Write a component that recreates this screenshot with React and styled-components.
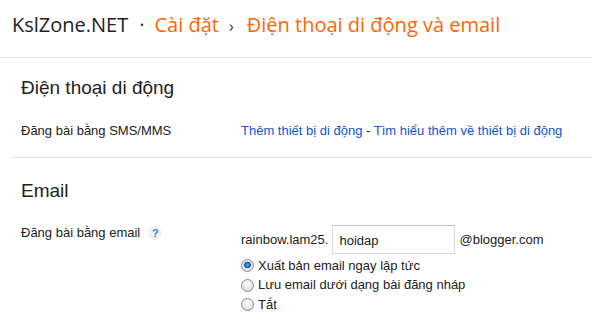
import React, { useState } from "react";
import styled, { createGlobalStyle } from "styled-components";

const GlobalStyle = createGlobalStyle`
  html, body {
    margin: 0;
    padding: 0;
    background: #fff;
  }
  body {
    font-family: "Liberation Sans", Arial, sans-serif;
    font-size: 13px;
    color: #222;
  }
`;

const Header = styled.div`
  height: 58px;
  box-sizing: border-box;
  border-bottom: 1px solid #e5e5e5;
  padding: 11px 0 0 12px;
  display: flex;
  align-items: baseline;
  font-family: "Open Sans", sans-serif;
  font-size: 20px;
  line-height: 28px;
  white-space: nowrap;
`;

const Crumb = styled.span`
  color: ${({ $active }) => ($active ? "#f60" : "#222")};
`;

const Sep = styled.span`
  color: #333;
  font-size: ${({ $small }) => ($small ? "16px" : "20px")};
  margin: 0 ${({ $right }) => $right}px 0 ${({ $left }) => $left}px;
`;

const Section = styled.div`
  padding: 0 0 0 21px;
`;

const Title = styled.h2`
  margin: 0;
  padding-top: ${({ $top }) => $top}px;
  font-size: 19px;
  font-weight: normal;
  line-height: 22px;
  color: #222;
`;

const Row = styled.div`
  display: grid;
  grid-template-columns: 220px 1fr;
  margin-top: ${({ $top }) => $top}px;
  line-height: 16px;
`;

const Label = styled.div`
  display: flex;
  align-items: center;
  gap: 8px;
  align-self: start;
`;

const Help = styled.span`
  width: 14px;
  height: 14px;
  border-radius: 50%;
  background: #f1f1f1;
  color: #4d7de0;
  font-size: 11px;
  font-weight: bold;
  line-height: 14px;
  text-align: center;
`;

const Link = styled.a`
  color: #15c;
  text-decoration: none;
`;

const Divider = styled.div`
  height: 1px;
  background: #e5e5e5;
  margin: 18px 0 0 11px;
`;

const EmailLine = styled.div`
  display: flex;
  align-items: center;
  gap: 4px;
`;

const Input = styled.input`
  width: 123px;
  height: 29px;
  box-sizing: border-box;
  border: 1px solid #d9d9d9;
  border-top-color: #c0c0c0;
  border-radius: 1px;
  padding: 1px 6px 0;
  font-family: "Liberation Sans", Arial, sans-serif;
  font-size: 13px;
  color: #222;
  outline: none;
`;

const Options = styled.div`
  display: flex;
  flex-direction: column;
  margin-top: 2px;
`;

const Option = styled.label`
  display: flex;
  align-items: center;
  gap: 4px;
  height: 19.5px;
`;

const Radio = styled.input.attrs({ type: "radio" })`
  appearance: none;
  margin: 0;
  width: 13px;
  height: 13px;
  border-radius: 50%;
  border: 1px solid #8a8a8a;
  box-sizing: border-box;
  background: radial-gradient(circle at 50% 35%, #fdfdfd 0%, #e8e8e8 55%, #cfcfcf 100%);
  &:checked {
    background: radial-gradient(circle at 50% 45%, #5cb0f0 0%, #1d6db8 28%, #0e4f93 38%, #dfe9f3 44%, #e6e6e6 70%, #cfcfcf 100%);
  }
`;

export default function App() {
  const [mode, setMode] = useState("publish");
  const [name, setName] = useState("hoidap");
  const options = [
    ["publish", "Xuất bản email ngay lập tức"],
    ["draft", "Lưu email dưới dạng bài đăng nháp"],
    ["off", "Tắt"],
  ];
  return (
    <>
      <GlobalStyle />
      <Header>
        <Crumb>KslZone.NET</Crumb>
        <Sep $left={11} $right={10}>·</Sep>
        <Crumb $active>Cài đặt</Crumb>
        <Sep $left={10} $right={13} $small>›</Sep>
        <Crumb $active>Điện thoại di động và email</Crumb>
      </Header>
      <Section>
        <Title $top={19}>Điện thoại di động</Title>
        <Row $top={24}>
          <Label>Đăng bài bằng SMS/MMS</Label>
          <div>
            <Link href="#">Thêm thiết bị di động</Link> -{" "}
            <Link href="#">Tìm hiểu thêm về thiết bị di động</Link>
          </div>
        </Row>
      </Section>
      <Divider />
      <Section>
        <Title $top={22}>Email</Title>
        <Row $top={23}>
          <Label>
            Đăng bài bằng email <Help>?</Help>
          </Label>
          <div>
            <EmailLine>
              <span>rainbow.lam25.</span>
              <Input value={name} onChange={(e) => setName(e.target.value)} />
              <span>@blogger.com</span>
            </EmailLine>
            <Options>
              {options.map(([key, text]) => (
                <Option key={key}>
                  <Radio
                    name="mode"
                    checked={mode === key}
                    onChange={() => setMode(key)}
                  />
                  {text}
                </Option>
              ))}
            </Options>
          </div>
        </Row>
      </Section>
    </>
  );
}
